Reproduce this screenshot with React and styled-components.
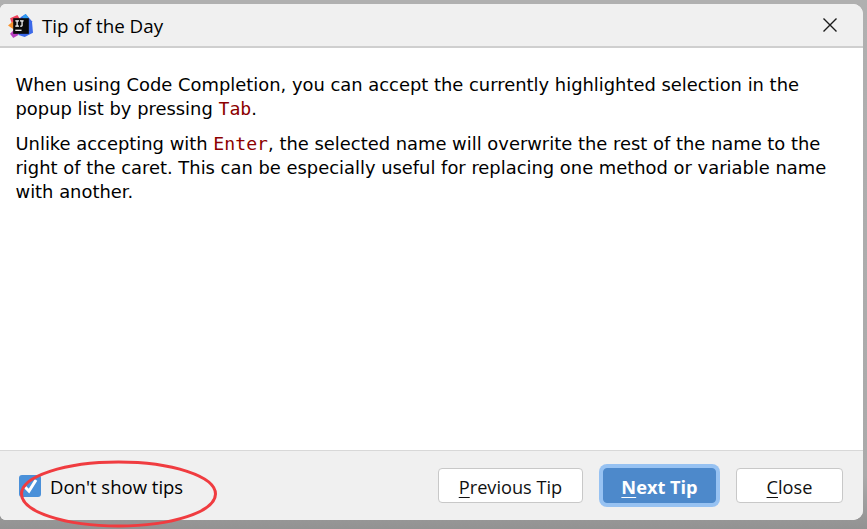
import React from "react";
import styled, { createGlobalStyle } from "styled-components";

const Global = createGlobalStyle`
  html, body { margin: 0; padding: 0; }
  body { width: 867px; height: 529px; overflow: hidden; background: #fff; }
`;

const Desktop = styled.div`
  position: relative;
  width: 867px;
  height: 529px;
  overflow: hidden;
  padding: 4px 4px 9px 0;
  box-sizing: border-box;
  background: linear-gradient(#b0b0b0 0, #aaa 90%, #929292 100%);
`;

const Dialog = styled.div`
  height: 100%;
  display: flex;
  flex-direction: column;
  border-radius: 6px 10px 10px 6px;
  overflow: hidden;
  background: #fff;
`;

const TitleBar = styled.div`
  height: 42px;
  flex: none;
  display: flex;
  align-items: center;
  padding: 0 26px 0 8px;
  gap: 9px;
  background: #f0f0f0;
  border-bottom: 2px solid #cfcfcf;
`;

const Title = styled.span`
  flex: 1;
  padding-top: 2px;
  font: 18.8px "Open Sans", sans-serif;
  color: #000;
`;

const Body = styled.div`
  flex: 1;
  padding: 25px 15px 0 15.5px;
  font: 17.9px/24px "DejaVu Sans", sans-serif;
  color: #000;
`;

const Para = styled.p`
  margin: 0 0 11px;
`;

const Code = styled.code`
  font: 18.2px/20px "DejaVu Sans Mono", monospace;
  color: #8c0000;
`;

const Footer = styled.div`
  height: 69px;
  flex: none;
  display: flex;
  align-items: center;
  padding: 0 20px 0 19px;
  background: #f0f0f0;
  border-top: 1px solid #d8d8d8;
`;

const Check = styled.span`
  width: 22px;
  height: 22px;
  border-radius: 3px;
  background: #4a90d9;
  display: flex;
  align-items: center;
  justify-content: center;
`;

const CheckLabel = styled.span`
  flex: 1;
  margin-left: 9px;
  padding-top: 2px;
  font: 18.5px "Open Sans", sans-serif;
  color: #000;
`;

const Button = styled.button`
  height: 35px;
  width: ${(p) => p.$w}px;
  margin-left: ${(p) => p.$gap}px;
  padding: 2px 0 0;
  box-sizing: border-box;
  border-radius: 4px;
  font: ${(p) => (p.$primary ? 700 : 400)} 18.2px "Open Sans", sans-serif;
  color: ${(p) => (p.$primary ? "#fff" : "#111")};
  background: ${(p) => (p.$primary ? "#4d89cb" : "#fff")};
  border: ${(p) => (p.$primary ? "1px solid #4d89cb" : "1px solid #c8c8c8")};
  box-shadow: ${(p) => (p.$primary ? "0 0 0 4px #97c2f2" : "none")};
  u { text-underline-offset: 3px; }
`;

const Ellipse = styled.svg`
  position: absolute;
  left: 18px;
  top: 459px;
`;

const Logo = () => (
  <svg width="25" height="25" viewBox="0 0 24 24">
    <path d="M2 5 L9 2 L13 8 L5 14 Z" fill="#f0435c" />
    <path d="M0 12 L5 8 L6 16 Z" fill="#f7932e" />
    <path d="M2 20 L8 14 L10 21 L5 24 Z" fill="#b83fc0" />
    <path d="M12 4 L17 1 L23 8 L24 19 L16 23 L10 21 Z" fill="#3a68e8" />
    <path d="M14 3 L17 1 L20 5 L15 7 Z" fill="#2f9cf0" />
    <rect x="5" y="5" width="15" height="15" fill="#0a0a0a" />
    <path d="M7 7.5 H10.5 M8.75 7.5 V12.5 M7 12.5 H10.5 M11.5 7.5 H15 M13.5 7.5 V12 Q13.5 12.8 11.7 12.5" stroke="#fff" strokeWidth="1.2" fill="none" />
    <rect x="7" y="16" width="6" height="1.2" fill="#fff" />
  </svg>
);

export default function App() {
  return (
    <Desktop>
      <Global />
      <Dialog>
        <TitleBar>
          <Logo />
          <Title>Tip of the Day</Title>
          <svg width="14" height="14" viewBox="0 0 14 14">
            <path d="M0.5 0.5 L13.5 13.5 M13.5 0.5 L0.5 13.5" stroke="#1a1a1a" strokeWidth="1.4" />
          </svg>
        </TitleBar>
        <Body>
          <Para>
            When using Code Completion, you can accept the currently highlighted selection in the
            popup list by pressing <Code>Tab</Code>.
          </Para>
          <Para>
            Unlike accepting with <Code>Enter</Code>, the selected name will overwrite the rest of
            the name to the right of the caret. This can be especially useful for replacing one
            method or variable name with another.
          </Para>
        </Body>
        <Footer>
          <Check>
            <svg width="22" height="22" viewBox="0 0 22 22">
              <path d="M6 12 L10 16 L17 5" stroke="#fff" strokeWidth="3" fill="none" />
            </svg>
          </Check>
          <CheckLabel>Don't show tips</CheckLabel>
          <Button $w={145} $gap={0}><u>P</u>revious Tip</Button>
          <Button $w={113} $gap={20} $primary><u>N</u>ext Tip</Button>
          <Button $w={107} $gap={20}><u>C</u>lose</Button>
        </Footer>
      </Dialog>
      <Ellipse width="204" height="70" viewBox="0 0 204 70">
        <ellipse cx="100.5" cy="35" rx="97" ry="32" fill="none" stroke="#f03c40" strokeWidth="3" />
      </Ellipse>
    </Desktop>
  );
}
